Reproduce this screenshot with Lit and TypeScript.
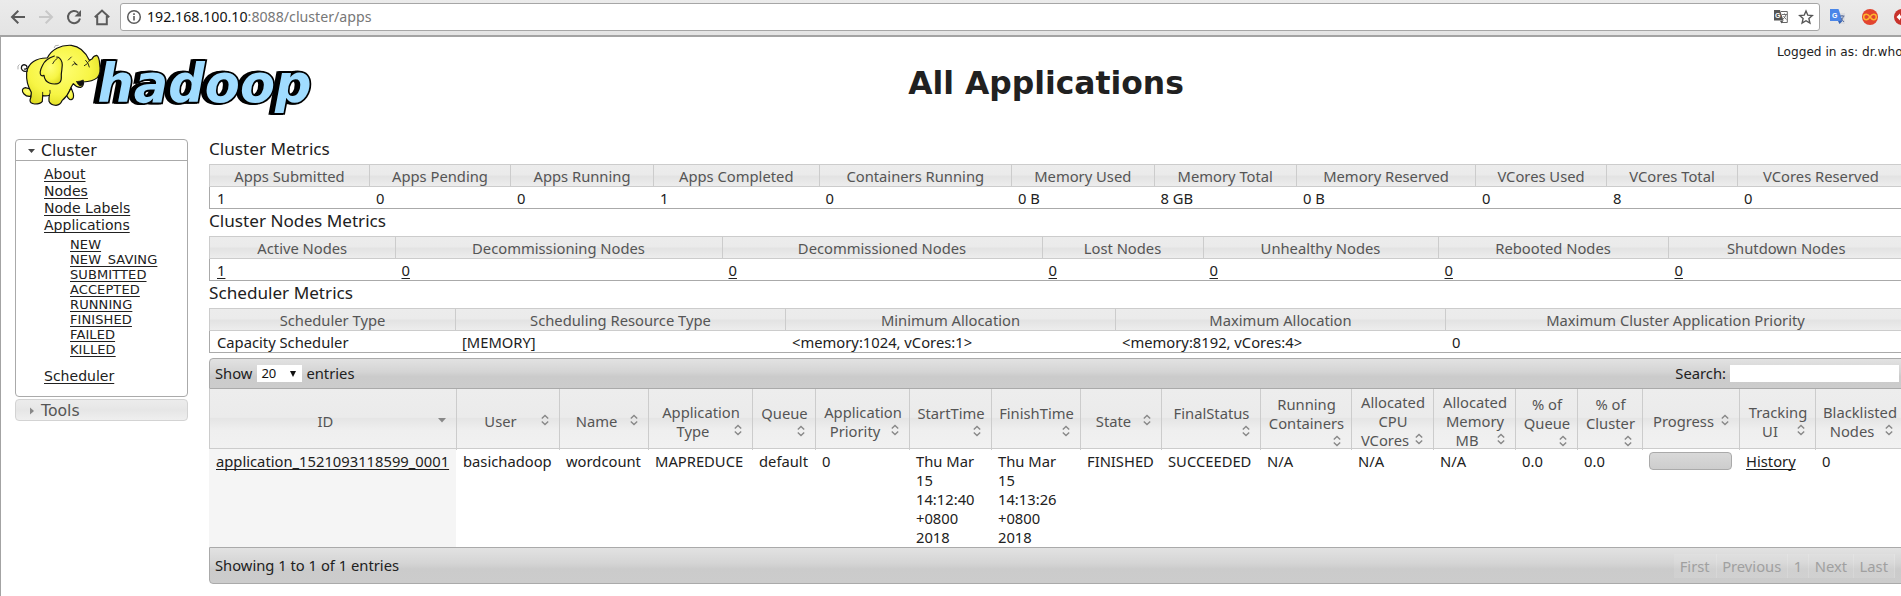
import { LitElement, html, css, svg, nothing } from "lit";

interface Metric { title: string; cols: [string, string, number][]; link?: boolean; }
interface Column { lines: string[]; width: number; sort?: string; wrap?: boolean; }

const METRICS: Metric[] = [
  { title: "Cluster Metrics", cols: [
    ["Apps Submitted", "1", 160], ["Apps Pending", "0", 141], ["Apps Running", "0", 143],
    ["Apps Completed", "1", 165.5], ["Containers Running", "0", 192.5], ["Memory Used", "0 B", 142.5],
    ["Memory Total", "8 GB", 142.5], ["Memory Reserved", "0 B", 179], ["VCores Used", "0", 131],
    ["VCores Total", "8", 131], ["VCores Reserved", "0", 167]] },
  { title: "Cluster Nodes Metrics", link: true, cols: [
    ["Active Nodes", "1", 185.5], ["Decommissioning Nodes", "0", 327], ["Decommissioned Nodes", "0", 320],
    ["Lost Nodes", "0", 161], ["Unhealthy Nodes", "0", 235], ["Rebooted Nodes", "0", 230],
    ["Shutdown Nodes", "0", 236.5]] },
  { title: "Scheduler Metrics", cols: [
    ["Scheduler Type", "Capacity Scheduler", 246], ["Scheduling Resource Type", "[MEMORY]", 330],
    ["Minimum Allocation", "<memory:1024, vCores:1>", 330], ["Maximum Allocation", "<memory:8192, vCores:4>", 330],
    ["Maximum Cluster Application Priority", "0", 460]] },
];

const COLUMNS: Column[] = [
  { lines: ["ID"], width: 247, sort: "desc" },
  { lines: ["User"], width: 103 },
  { lines: ["Name"], width: 89 },
  { lines: ["Application", "Type"], width: 104 },
  { lines: ["Queue"], width: 63, wrap: true },
  { lines: ["Application", "Priority"], width: 94 },
  { lines: ["StartTime"], width: 82, wrap: true },
  { lines: ["FinishTime"], width: 89, wrap: true },
  { lines: ["State"], width: 81 },
  { lines: ["FinalStatus"], width: 99, wrap: true },
  { lines: ["Running", "Containers"], width: 91, wrap: true },
  { lines: ["Allocated", "CPU", "VCores"], width: 82 },
  { lines: ["Allocated", "Memory", "MB"], width: 82 },
  { lines: ["% of", "Queue"], width: 62, wrap: true },
  { lines: ["% of", "Cluster"], width: 65, wrap: true },
  { lines: ["Progress"], width: 97 },
  { lines: ["Tracking", "UI"], width: 76 },
  { lines: ["Blacklisted", "Nodes"], width: 88 },
];

const STATES = ["NEW", "NEW_SAVING", "SUBMITTED", "ACCEPTED", "RUNNING", "FINISHED", "FAILED", "KILLED"];

const tracks = (w: number[]) => `grid-template-columns:${w.map((n) => n + "px").join(" ")}`;

class BrowserBar extends LitElement {
  static styles = css`
    :host { display: flex; height: 35px; box-sizing: content-box; border-bottom: 2px solid #a3a3a3;
      background: linear-gradient(#ebebeb, #e4e4e4); align-items: flex-start; font: 14.18px/26px "Noto Sans", sans-serif; }
    .nav { display: flex; width: 120px; height: 34px; flex: none; }
    .field { display: flex; box-sizing: border-box; width: 1700px; height: 28px; margin-top: 3px; flex: none;
      border: 1px solid #a6a6a6; border-radius: 3px; background: #fff; color: #777; }
    .info { width: 26px; height: 26px; flex: none; }
    .url { flex: 1; white-space: pre; }
    .host { color: #111; }
    .tools { width: 60px; height: 26px; flex: none; }
    .ext { width: 81px; height: 34px; flex: none; }
    .g { font: bold 7px "Liberation Sans", sans-serif; }
  `;
  render() {
    return html`
      <svg class="nav" viewBox="0 0 120 34" fill="none" stroke="#5a5a5a" stroke-width="2">
        <path d="M25 17H12.5M18.3 10.7 12 17l6.300 6.300" />
        <path d="M39 17h12.500M45.700 10.700 52 17l-6.300 6.300" stroke="#c8c8c8" />
        <path d="M78.300 12.600A6.100 6.100 0 1 0 80 18.500" /><path d="M81 10v6.500h-6.500z" fill="#5a5a5a" stroke="none" />
        <path d="M94.800 17.300 102 10.600l7.200 6.700M97.200 16v8.200h9.600V16" />
      </svg>
      <div class="field">
        <svg class="info" viewBox="0 0 26 26"><circle cx="13" cy="13" r="6.300" fill="none" stroke="#5a5a5a" stroke-width="1.500" /><path d="M12.200 12h1.600v4.500h-1.600zM12.200 9.300h1.600v1.600h-1.600z" fill="#5a5a5a" /></svg>
        <div class="url"><span class="host">192.168.100.10</span>:8088/cluster/apps</div>
        <svg class="tools" viewBox="1759 4 60 26">
          <path d="M1781 11.500h6.300v11h-5.500" fill="#fff" stroke="#666" />
          <path d="M1774 10h6l3.500 10.500h-9.500z" fill="#555" /><path d="m1780 21 3.500-.5-2 3z" fill="#555" />
          <text class="g" x="1775" y="17.500" fill="#fff">G</text>
          <path d="M1782 14.500h5M1784.500 13.500v1M1786 14.500q-.5 3-3.500 5M1783.500 16q1 2 3 3.500" stroke="#666" fill="none" stroke-width=".9" />
          <path d="m1806 11 1.800 4.200 4.500.4-3.400 3 1 4.400-3.900-2.300-3.900 2.300 1-4.400-3.400-3 4.500-.4z" fill="none" stroke="#555" stroke-width="1.400" />
        </svg>
      </div>
      <svg class="ext" viewBox="1820 0 81 34">
        <path d="M1836 13h9v11h-6z" fill="#dcdde0" />
        <path d="M1830 9h8.500l4 12h-12.500z" fill="#4a86e8" /><path d="m1838 21h4.500l-3 3z" fill="#3463b5" />
        <text class="g" x="1832" y="18" fill="#fff">G</text>
        <path d="M1839.500 16h5M1842 15v1M1843.500 16q-.5 3-3 5M1841 18q1 2 3 4" stroke="#5b6f9c" fill="none" />
        <circle cx="1870" cy="17" r="8" fill="#e2442f" />
        <path d="M1870 17c-1.600-2.200-2.600-2.700-3.600-2.700a2.600 2.600 0 0 0 0 5.400c1 0 2-.5 3.600-2.700s2.600-2.700 3.600-2.700a2.600 2.600 0 0 1 0 5.400c-1 0-2-.5-3.600-2.700z" fill="none" stroke="#ffb52e" stroke-width="1.500" />
        <circle cx="1902" cy="17" r="8" fill="#c8322b" /><path d="m1896.500 17 3.500-3.500v2h3v3h-3v2z" fill="#fff" />
      </svg>`;
  }
}
customElements.define("browser-bar", BrowserBar);

class HadoopLogo extends LitElement {
  static styles = css`
    :host { display: block; width: 310px; height: 85px; }
    .art { display: block; width: 310px; height: 85px; }
    .word { font: italic bold 53px "DejaVu Sans", sans-serif; filter: drop-shadow(-2px 0 #000) drop-shadow(-2px 0 #000); }
  `;
  render() {
    return html`<svg class="art" viewBox="10 35 310 85">
      <text class="word" x="97.500" y="101.500" textLength="214" lengthAdjust="spacingAndGlyphs" fill="#a0dcff" stroke="#000" stroke-width="3.600" paint-order="stroke">hadoop</text>
      <defs><radialGradient id="skin" cx=".45" cy=".4" r=".65"><stop offset="0" stop-color="#ffff78" /><stop offset=".65" stop-color="#f7f545" /><stop offset="1" stop-color="#dedb22" /></radialGradient></defs>
      <g transform="translate(10 35) scale(.3333)" fill="url(#skin)" stroke="#111" stroke-width="3.500" stroke-linejoin="round" stroke-linecap="round">
        <path d="M168 178Q176 196 184 194 193 192 190 176L184 160Z" />
        <path d="M46 158C36 160 34 168 42 177Q50 186 62 184L72 165Z" />
        <path d="M112 69C80 68 54 84 50 112 48 138 54 156 64 172Q64 186 60 196 60 206 74 207 92 207 97 199L98 182Q110 184 118 181 116 190 117 199 122 211 138 211 151 209 156 197 172 184 180 164Q184 154 190 146 200 158 212 157 222 154 219 141 248 140 262 128 274 114 269 88 268 66 260 61 250 62 246 72L238 76C228 54 210 34 184 31 152 29 124 44 112 69Z" />
        <path d="M133 63C118 68 104 76 97 92 90 106 88 114 93 121Q98 124 102 121 104 138 118 144 130 149 143 146 154 142 154 128C152 108 160 96 156 82 152 70 146 66 140 66" />
        <path d="M52 108Q38 112 34 100 34 90 42 89 52 91 51 98 49 104 43 102" fill="none" stroke-width="3.500" />
        <path d="M200 140Q212 139 220 135L221 147Q214 156 207 151 202 146 200 140Z" fill="#111" stroke-width="2" />
        <path d="M186 91Q192 82 201 88M192 80L200 90M175 75L184 66M227 76Q236 84 238 96M234 82L242 74M223 92L232 86M142 70Q132 76 128 86M98 182V172M118 181Q122 174 120 166M180 164L184 156" fill="none" stroke-width="2.600" />
        <path d="M133 38L136 32 145 31M24 102V93L28 89" fill="none" stroke="#888" stroke-width="2" />
      </g></svg>`;
  }
}
customElements.define("hadoop-logo", HadoopLogo);

class SideNav extends LitElement {
  static styles = css`
    :host { display: flex; flex-direction: column; gap: 2px; width: 173px; font-family: "DejaVu Sans", sans-serif; color: #212121; }
    .panel { box-sizing: border-box; height: 258px; border: 1px solid #aaa; border-radius: 4px; }
    .head { display: flex; align-items: center; gap: 4px; box-sizing: border-box; height: 21px; padding: 1px 0 0 10px; border-bottom: 1px solid #aaa; font-size: 15.7px; line-height: 19px; }
    .closed { height: 22px; border: 1px solid #d3d3d3; border-radius: 4px; background: linear-gradient(#ececec, #e6e6e6 50%, #efefef); color: #555; }
    .arrow { width: 11px; height: 8px; flex: none; }
    .list { display: flex; flex-direction: column; padding: 5px 0 0 28px; font-size: 14.04px; line-height: 17px; }
    .sub { display: flex; flex-direction: column; padding: 3px 0 11px 26px; font-size: 13px; line-height: 15px; letter-spacing: .1px; }
    .item { text-decoration: underline; text-underline-offset: 1.5px; text-decoration-thickness: 1px; text-decoration-skip-ink: none; align-self: flex-start; }
  `;
  render() {
    return html`
      <div class="panel">
        <div class="head"><svg class="arrow" viewBox="0 0 11 8"><path d="M2 2h7l-3.500 4z" fill="#444" /></svg>Cluster</div>
        <div class="list">
          ${["About", "Nodes", "Node Labels", "Applications"].map((t) => html`<a class="item">${t}</a>`)}
          <div class="sub">${STATES.map((t) => html`<a class="item">${t}</a>`)}</div>
          <a class="item">Scheduler</a>
        </div>
      </div>
      <div class="head closed"><svg class="arrow" viewBox="0 0 11 8"><path d="M4 .500v7l4-3.500z" fill="#888" /></svg>Tools</div>`;
  }
}
customElements.define("side-nav", SideNav);

class MetricTable extends LitElement {
  static properties = { metric: { attribute: false } };
  declare metric: Metric;
  static styles = css`
    :host { display: block; color: #212121; }
    .title { height: 27px; font-size: 17.15px; line-height: 24px; }
    .head, .row { display: grid; box-sizing: border-box; }
    .head { height: 23px; border: 1px solid #ccc; border-right: 0; background: linear-gradient(#ececec, #ebebeb 45%, #e3e3e3 55%, #ededed); color: #555; }
    .row { height: 22px; border: 1px solid #aaa; border-width: 0 0 1px 1px; }
    .th { box-sizing: border-box; text-align: center; border-right: 1px solid #ccc; line-height: 22px; white-space: nowrap; }
    .td { padding-left: 6px; line-height: 23px; white-space: nowrap; }
    .td:first-child { padding-left: 7px; }
    .link { text-decoration: underline; text-underline-offset: 2px; text-decoration-thickness: 1px; }
  `;
  render() {
    const style = tracks(this.metric.cols.map((c) => c[2]));
    return html`<div class="title">${this.metric.title}</div>
      <div class="head" style=${style}>${this.metric.cols.map((c) => html`<div class="th">${c[0]}</div>`)}</div>
      <div class="row" style=${style}>${this.metric.cols.map((c) => html`<div class="td"><span class=${this.metric.link ? "link" : ""}>${c[1]}</span></div>`)}</div>`;
  }
}
customElements.define("metric-table", MetricTable);

class AppsTable extends LitElement {
  static styles = css`
    :host { display: block; margin-top: 5px; color: #212121; }
    .bar { display: flex; align-items: center; box-sizing: border-box; border: 1px solid #aaa; background: linear-gradient(#e2e2e2, #d4d4d4 45%, #cbcbcb 60%, #cccccc); }
    .top { height: 31px; border-radius: 4px 0 0 0; padding-left: 5px; }
    .bottom { height: 37px; border-radius: 0 0 0 4px; padding-left: 5px; }
    .grow { flex: 1; }
    .select { display: flex; align-items: center; box-sizing: border-box; width: 45px; height: 17px; margin: 0 4px 0 5px; padding: 0 6px 0 4px; justify-content: space-between; background: #fff; color: #111; font-size: 13px; line-height: 17px; }
    .caret { width: 6px; height: 6px; }
    .search { width: 169px; height: 17px; margin: 0 5px 0 4px; background: #fff; }
    .head, .row { display: grid; }
    .head { height: 60px; box-sizing: border-box; border: 1px solid #ccc; border-width: 0 0 1px 1px; background: linear-gradient(#ededed, #ebebeb 48%, #e5e5e5 50%, #efefef 70%, #f1f1f1); color: #555; }
    .th { display: flex; flex-direction: column; justify-content: center; box-sizing: border-box; border-right: 1px solid #ccc; padding: 4px 6px 0 7px; line-height: 19px; text-align: center; }
    .line { display: flex; justify-content: center; }
    .text { flex: 1; margin: 0 -4px; }
    .icon { width: 16px; height: 16px; flex: none; }
    .own { align-self: flex-end; }
    .row { height: 98px; }
    .td { padding: 3px 0 0 7px; line-height: 19px; white-space: nowrap; }
    .id { background: #f5f5f5; }
    .link { text-decoration: underline; text-underline-offset: 2px; text-decoration-thickness: 1px; text-decoration-skip-ink: none; }
    .progress { box-sizing: border-box; width: 83px; height: 18px; border: 1px solid #aaa; border-radius: 4px; background: linear-gradient(#d9d9d9, #cdcdcd); }
    .pages { display: flex; margin-right: 9px; color: #a0a0a0; }
    .page { box-sizing: border-box; height: 24px; line-height: 24px; padding: 0 6px 0 5.5px; background: rgba(255, 255, 255, .1); border-right: 1px solid rgba(255, 255, 255, .15); text-align: center; }
  `;
  icon(c: Column) {
    return html`<svg class="icon ${c.wrap ? "own" : ""}" viewBox="0 0 16 16">${c.sort
      ? svg`<path d="M4 6h8l-4 4.500z" fill="#888" />`
      : svg`<path d="m4.800 6.500 3.200-3 3.200 3M4.800 9.500l3.200 3 3.200-3" fill="none" stroke="#888" stroke-width="1.400" />`}</svg>`;
  }
  time(parts: string[]) { return parts.map((p) => html`<div>${p}</div>`); }
  render() {
    const style = tracks(COLUMNS.map((c) => c.width));
    const cells: unknown[] = [
      html`<span class="link">application_1521093118599_0001</span>`, "basichadoop", "wordcount", "MAPREDUCE", "default", "0",
      this.time(["Thu Mar", "15", "14:12:40", "+0800", "2018"]), this.time(["Thu Mar", "15", "14:13:26", "+0800", "2018"]),
      "FINISHED", "SUCCEEDED", "N/A", "N/A", "N/A", "0.0", "0.0", html`<div class="progress"></div>`,
      html`<span class="link">History</span>`, "0"];
    return html`
      <div class="bar top">Show<div class="select">20<svg class="caret" viewBox="0 0 7 7"><path d="M0 0h7L3.500 7z" fill="#111" /></svg></div>entries
        <div class="grow"></div>Search:<div class="search"></div></div>
      <div class="head" style=${style}>${COLUMNS.map((c) => html`<div class="th">
        ${c.lines.map((t, i) => html`<div class="line"><div class="text">${t}</div>${!c.wrap && i === c.lines.length - 1 ? this.icon(c) : nothing}</div>`)}
        ${c.wrap ? this.icon(c) : nothing}</div>`)}</div>
      <div class="row" style=${style}>${cells.map((c, i) => html`<div class="td ${i === 0 ? "id" : ""}">${c}</div>`)}</div>
      <div class="bar bottom">Showing 1 to 1 of 1 entries<div class="grow"></div>
        <div class="pages">${["First", "Previous", "1", "Next", "Last"].map((t) => html`<div class="page">${t}</div>`)}</div></div>`;
  }
}
customElements.define("apps-table", AppsTable);

class AppRoot extends LitElement {
  static styles = css`
    :host { display: block; width: 100%; height: 596px; overflow: hidden; background: #fff; color: #212121; font: 14.75px/19px "Noto Sans", "Open Sans", sans-serif; }
    .page { box-sizing: border-box; height: 559px; border-left: 1px solid #a3a3a3; overflow: hidden; }
    .header { display: grid; grid-template-columns: 310px 1452px auto; height: 100px; padding-left: 9px; font-family: "DejaVu Sans", sans-serif; }
    .logo { margin-top: -2px; }
    .title { margin: 0; font-size: 31.4px; line-height: 36px; padding-top: 28px; text-align: center; }
    .user { padding: 6px 0 0 5px; font-size: 12.15px; line-height: 19px; white-space: nowrap; }
    .body { display: grid; grid-template-columns: 173px 1696px; column-gap: 21px; padding-left: 14px; align-items: start; }
    .nav { margin-top: 2px; }
  `;
  render() {
    return html`<browser-bar></browser-bar>
      <div class="page">
        <div class="header"><hadoop-logo class="logo"></hadoop-logo><h1 class="title">All Applications</h1><div class="user">Logged in as: dr.who</div></div>
        <div class="body"><side-nav class="nav"></side-nav>
          <div>${METRICS.map((m) => html`<metric-table .metric=${m}></metric-table>`)}<apps-table></apps-table></div>
        </div>
      </div>`;
  }
}
customElements.define("app-root", AppRoot);
